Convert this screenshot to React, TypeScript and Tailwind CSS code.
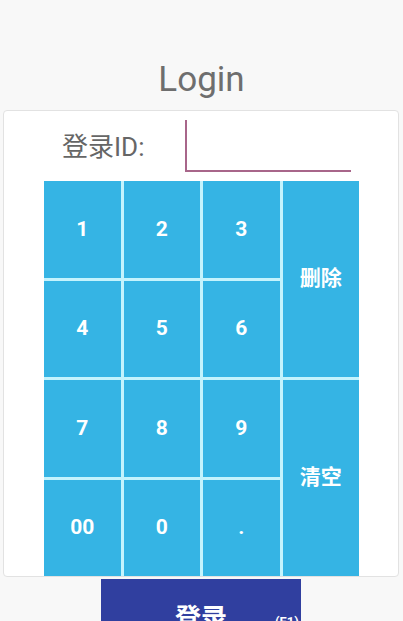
import React from "react";

const keys: { label: string; cls: string }[] = [
  { label: "1", cls: "" },
  { label: "2", cls: "" },
  { label: "3", cls: "" },
  { label: "删除", cls: "row-span-2" },
  { label: "4", cls: "" },
  { label: "5", cls: "" },
  { label: "6", cls: "" },
  { label: "7", cls: "" },
  { label: "8", cls: "" },
  { label: "9", cls: "" },
  { label: "清空", cls: "row-span-2" },
  { label: "00", cls: "" },
  { label: "0", cls: "" },
  { label: ".", cls: "" },
];

export default function App() {
  return (
    <div className="w-[403px] h-[621px] overflow-hidden bg-[#f8f8f8] flex flex-col font-['Roboto','Noto_Sans_CJK_SC',sans-serif]">
      <div className="shrink-0 h-[110px] pt-[60px] text-center">
        <span className="text-[35px] leading-[40px] text-[#6e6e6e]">Login</span>
      </div>
      <div className="shrink-0 ml-[3px] w-[396px] h-[467px] bg-white border border-[#e2e2e2] rounded-[4px] flex flex-col">
        <div className="shrink-0 mt-[9px] h-[52px] flex items-center pl-[58px]">
          <span className="w-[123px] text-[26px] leading-none text-[#666666] pt-[2px]">
            登录ID:
          </span>
          <div className="w-[166px] h-[52px] border-l-2 border-b-2 border-[#a8668a]" />
        </div>
        <div className="shrink-0 mt-[9px] ml-[40px] w-[315px] h-[395px] grid grid-cols-4 grid-rows-4 gap-[3px] bg-[#c4f3fd]">
          {keys.map((k) => (
            <div
              key={k.label}
              className={`${k.cls} bg-[#35b4e4] flex items-center justify-center text-white font-bold text-[21px]`}
            >
              {k.label}
            </div>
          ))}
        </div>
      </div>
      <div className="shrink-0 mt-[2px] ml-[101px] w-[200px] h-[70px] bg-[#303f9f] relative flex justify-center pt-[24px]">
        <span className="text-white font-bold text-[26px] leading-[30px]">登录</span>
        <span className="absolute left-[174px] top-[35px] text-white text-[13px] leading-[16px] font-bold">(F1)</span>
      </div>
    </div>
  );
}
